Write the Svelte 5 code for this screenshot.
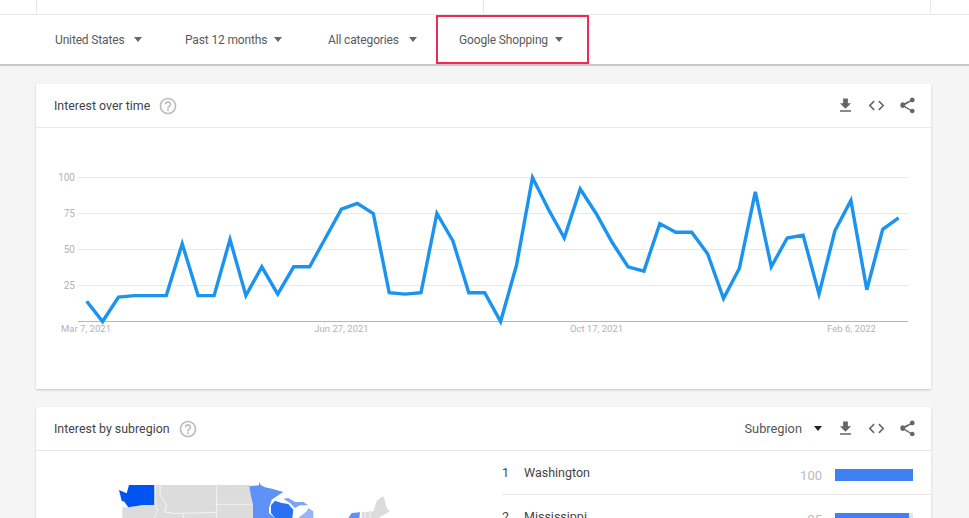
<script>
  const filters = ['United States', 'Past 12 months', 'All categories', 'Google Shopping'];

  // trend values, one per sample
  const values = [14, 0, 17, 18, 18, 18, 54, 18, 18, 57, 18, 38, 19, 38, 38, 58, 78, 82, 75, 20, 19, 20, 75, 56, 20, 20, 0, 39, 100, 78, 58, 92, 75, 55, 38, 35, 68, 62, 62, 47, 16, 37, 90, 38, 58, 60, 19, 63, 84, 22, 64, 72];
  const ticks = [100, 75, 50, 25];
  const dates = [
    { label: 'Mar 7, 2021', x: 86 },
    { label: 'Jun 27, 2021', x: 341.5 },
    { label: 'Oct 17, 2021', x: 596.5 },
    { label: 'Feb 6, 2022', x: 851.5 }
  ];

  const yFor = (v) => 321.5 - v * 1.44;
  const line = values.map((v, i) => `${(86.7 + i * 15.92).toFixed(1)},${yFor(v).toFixed(1)}`).join(' ');

  const regions = [
    { name: 'Washington', value: 100 },
    { name: 'Mississippi', value: 95 }
  ];
</script>

{#snippet actions()}
  <svg class="icon" viewBox="0 0 24 24"><path d="M19 9h-4V3H9v6H5l7 7 7-7zM5 18v2h14v-2H5z" /></svg>
  <svg class="icon" viewBox="0 0 24 24"><path class="code" d="M9 6.5 3.5 12 9 17.5M15 6.5l5.500 5.500L15 17.500" /></svg>
  <svg class="icon" viewBox="0 0 24 24"><path d="M18 16.100c-.8 0-1.500.3-2 .8L8.900 12.700c.1-.2.1-.5.100-.7s0-.5-.1-.7L16 7.200c.5.500 1.200.8 2 .8 1.700 0 3-1.300 3-3s-1.300-3-3-3-3 1.300-3 3c0 .2 0 .5.100.7L8 8.900C7.500 8.400 6.800 8 6 8c-1.700 0-3 1.300-3 3v1c0 1.700 1.300 3 3 3 .8 0 1.500-.3 2-.8l7.100 4.200c-.1.200-.1.400-.1.600 0 1.600 1.300 2.900 3 2.900s3-1.300 3-2.900-1.300-2.900-3-2.900z" /></svg>
{/snippet}

{#snippet help()}
  <svg class="help" viewBox="0 0 24 24"><path d="M11 18h2v-2h-2v2zm1-16C6.480 2 2 6.480 2 12s4.480 10 10 10 10-4.480 10-10S17.520 2 12 2zm0 18c-4.410 0-8-3.590-8-8s3.590-8 8-8 8 3.590 8 8-3.590 8-8 8zm0-14c-2.210 0-4 1.790-4 4h2c0-1.100.9-2 2-2s2 .9 2 2c0 2-3 1.750-3 5h2c0-2.250 3-2.500 3-5 0-2.210-1.790-4-4-4z" /></svg>
{/snippet}

<div class="page">
  <div class="top-strip">
    <div class="top-cell"></div>
    <div class="top-cell"></div>
  </div>

  <div class="filters">
    {#each filters as filter, i}
      <div class="filter" class:marked={i === 3}>
        <span>{filter}</span>
        <i class="caret"></i>
      </div>
    {/each}
  </div>

  <section class="card">
    <header class="card-head">
      <h2>Interest over time</h2>
      {@render help()}
      <div class="actions">{@render actions()}</div>
    </header>
    <svg class="chart" viewBox="36 128 895 261">
      {#each ticks as t}
        <line class="grid" x1="78" x2="908" y1={yFor(t)} y2={yFor(t)} />
        <text class="axis" x="75" y={yFor(t) + 3.500} text-anchor="end">{t}</text>
      {/each}
      <line class="base" x1="78" x2="908" y1="321.500" y2="321.500" />
      {#each dates as d}
        <text class="axis date" x={d.x} y="332" text-anchor="middle">{d.label}</text>
      {/each}
      <polyline class="trend" points={line} />
    </svg>
  </section>

  <section class="card">
    <header class="card-head">
      <h2>Interest by subregion</h2>
      {@render help()}
      <div class="actions">
        <div class="select"><span>Subregion</span><i class="caret dark"></i></div>
        {@render actions()}
      </div>
    </header>
    <div class="split">
      <div class="map-wrap">
        <svg class="map" viewBox="36 451 447 67">
          <path fill="#dcdcdc" d="M122.300 507.300 128.300 507.300 143.300 505 155 505 155 485 250 485 251 496.300 253 504.700 253 518 122.300 518Z" />
          <path fill="#dcdcdc" d="M361.700 512.300 373.300 511.300 376.700 501.300 380 498 383.300 496.300 385 501.300 386.700 508 390 511.300 381.700 516.300 378.300 518 361.700 518Z" />
          <g class="seams">
            <path d="M155.700 485V508.300L158 510 154.300 518" />
            <path d="M160 485V495L166.700 505 164.300 511.700 173.300 513.300H183.300L216.700 512.300" />
            <path d="M183.300 513.300V518" />
            <path d="M216.700 485V518" />
            <path d="M216.700 504.300H252" />
            <path d="M365 512V518M370 512V518" />
          </g>
          <path fill="#0055f0" d="M119 490 126.700 493.300 129 485 154.300 485 154.300 505 143.300 505 128.300 507.300 124.300 501.700 121.700 500.700Z" />
          <path fill="#5e92f6" d="M249.300 486.300 259 485.300 259 482 261 485.300 265 487.300 273 489 283.300 492 276.700 496.300 271.700 499.700 269 508 269 513 275 518 253 518 253 504.700 251 496.300Z" />
          <path fill="#2a70f0" d="M271 505.300 275 500.700 281.700 503 288.300 504 293.300 509.700 292.300 518 275 518 271 513Z" />
          <path fill="#7aa5f6" d="M283.300 498.700 288.300 498 295 502 303.300 502 308.300 505.300 300 505.300 295 508 290 503Z" />
          <path fill="#92b6f8" d="M298.300 518 306.700 511.300 308.300 508 313.300 511.300 313.300 518Z" />
          <path fill="#5e92f6" d="M348.300 518 351.700 513 360 512.300 359.300 518Z" />
        </svg>
      </div>
      <div class="ranks">
        {#each regions as region, i}
          <div class="rank">
            <span class="pos">{i + 1}</span>
            <span class="name">{region.name}</span>
            <span class="val">{region.value}</span>
            <div class="track"><div class="bar" style="width: {region.value}%"></div></div>
          </div>
        {/each}
      </div>
    </div>
  </section>
</div>

<style>
  :global(body) {
    background: #f5f5f5;
    font-family: Roboto, "Liberation Sans", sans-serif;
  }

  .page {
    height: 518px;
    overflow: hidden;
    display: flex;
    flex-direction: column;
  }

  .top-strip {
    flex: none;
    height: 14px;
    padding-left: 36px;
    display: grid;
    grid-template-columns: 447px 448px;
    background: #fff;
    border-bottom: 1px solid #e8e8e8;
  }

  .top-cell {
    border-left: 1px solid #e8e8e8;
  }

  .top-cell:last-child {
    border-right: 1px solid #e8e8e8;
  }

  .filters {
    flex: none;
    height: 49px;
    padding-left: 55px;
    display: flex;
    background: #fff;
    border-bottom: 2px solid #c8c8c8;
    margin-bottom: 18px;
    color: #5a5a5a;
    font-size: 12px;
    letter-spacing: -0.15px;
  }

  .filter {
    box-sizing: border-box;
    display: flex;
    align-items: center;
    width: 130px;
    gap: 10px;
  }

  .filter:nth-child(2) {
    width: 143px;
    gap: 7px;
  }

  .filter:nth-child(3) {
    width: 108px;
  }

  .filter.marked {
    width: 153px;
    padding-left: 21px;
    gap: 7px;
    border: 2px solid #ee2a55;
  }

  .caret {
    width: 0;
    height: 0;
    border-left: 4.250px solid transparent;
    border-right: 4.250px solid transparent;
    border-top: 5px solid #666;
  }

  .caret.dark {
    border-top-color: #222;
  }

  .card {
    flex: none;
    margin: 0 38px 18px 36px;
    background: #fff;
    box-shadow: 0 1px 2px rgba(0, 0, 0, 0.2);
  }

  .card-head {
    height: 43px;
    padding: 0 14px 0 18px;
    display: flex;
    align-items: center;
    gap: 8px;
    border-bottom: 1px solid #e8e8e8;
  }

  h2 {
    margin: 0;
    font-size: 12.400px;
    font-weight: 400;
    color: #444;
  }

  .help {
    width: 20px;
    height: 20px;
    fill: #bdbdbd;
  }

  .actions {
    margin-left: auto;
    display: flex;
    align-items: center;
    gap: 12px;
  }

  .select {
    display: flex;
    align-items: center;
    gap: 12px;
    margin-right: 2px;
    font-size: 12.800px;
    color: #555;
  }

  .icon {
    width: 19px;
    height: 19px;
    fill: #666;
  }

  .code {
    fill: none;
    stroke: #666;
    stroke-width: 2;
  }

  .chart {
    display: block;
    width: 895px;
    height: 261px;
  }

  .grid {
    stroke: #e9e9e9;
    stroke-width: 1;
  }

  .base {
    stroke: #b5b5b5;
    stroke-width: 1;
  }

  .axis {
    font-size: 10px;
    fill: #b3b3b3;
  }

  .date {
    font-size: 9.500px;
  }

  .trend {
    fill: none;
    stroke: #1a94f0;
    stroke-width: 3.400;
  }

  .split {
    display: grid;
    grid-template-columns: 447px 1fr;
  }

  .map {
    display: block;
    width: 447px;
    height: 67px;
  }

  .seams {
    fill: none;
    stroke: #f6f6f6;
    stroke-width: 0.9;
  }

  .ranks {
    padding-left: 19px;
  }

  .rank {
    box-sizing: border-box;
    height: 44px;
    display: flex;
    align-items: center;
    border-bottom: 1px solid #e8e8e8;
    padding-right: 18px;
    font-size: 12.500px;
    color: #444;
  }

  .pos {
    width: 22px;
  }

  .name {
    flex: 1;
    margin-top: -1px;
  }

  .val {
    margin: 5px 13px 0 0;
    font-size: 13px;
    color: #bbb;
  }

  .track {
    width: 78px;
    height: 12px;
    margin-top: 5px;
    background: #e6e6e6;
  }

  .bar {
    height: 100%;
    background: #3f80f2;
  }
</style>
